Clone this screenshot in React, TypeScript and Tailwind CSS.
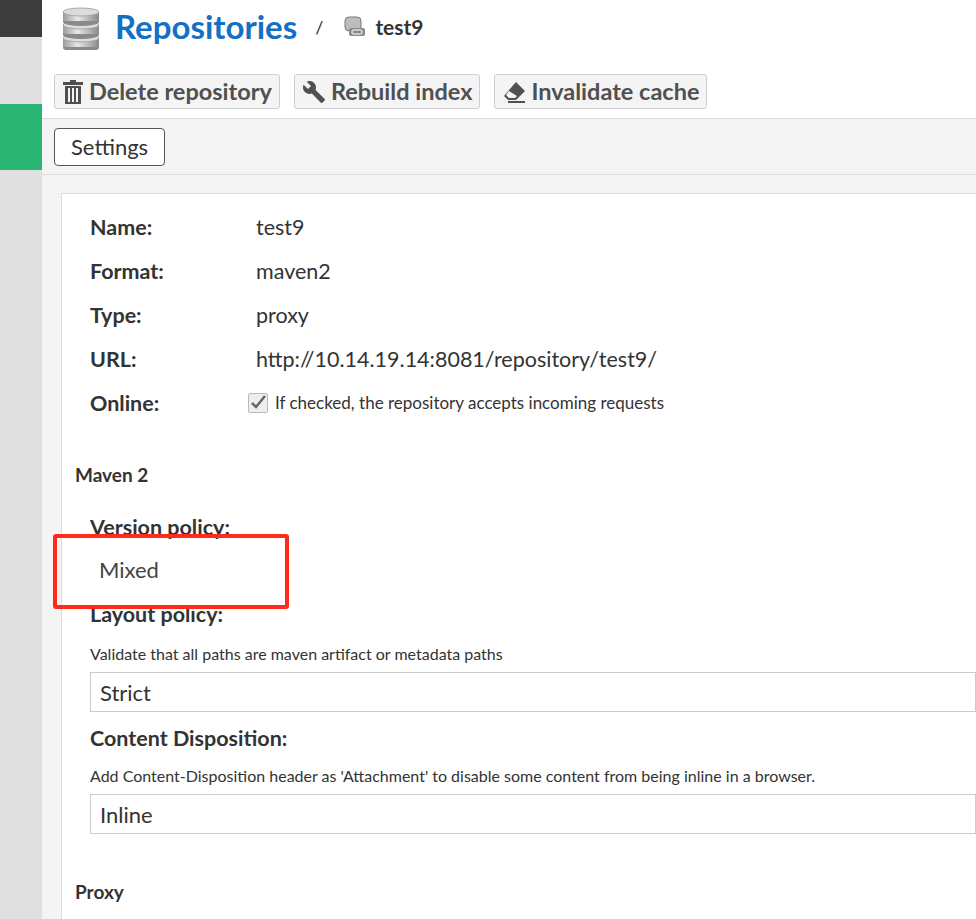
import React from "react";

const Db = ({ s }: { s: number }) => (
  <svg width={s} height={s * 1.15} viewBox="0 0 40 46">
    <defs>
      <linearGradient id="g" x1="0" x2="1">
        <stop offset="0" stopColor="#9a9a9a" />
        <stop offset="0.4" stopColor="#e8e8e8" />
        <stop offset="1" stopColor="#8a8a8a" />
      </linearGradient>
    </defs>
    {[30, 17, 4].map((y) => (
      <g key={y}>
        <rect x="2" y={y + 4} width="36" height="10" fill="url(#g)" />
        <ellipse cx="20" cy={y + 14} rx="18" ry="4" fill="#8a8a8a" />
        <rect x="2" y={y + 4} width="36" height="9" fill="url(#g)" />
        <ellipse cx="20" cy={y + 4} rx="18" ry="4" fill="#dcdcdc" stroke="#9a9a9a" strokeWidth="0.8" />
      </g>
    ))}
  </svg>
);

const Btn = ({ icon, label }: { icon: React.ReactNode; label: string }) => (
  <div className="flex items-center gap-[5px] h-[35px] px-[7px] border border-[#cfcfcf] rounded-[3px] bg-[#f4f4f4] text-[#505050] text-[23.5px] font-bold">
    {icon}
    <span>{label}</span>
  </div>
);

export default function App() {
  const rows = [
    ["Name:", "test9"],
    ["Format:", "maven2"],
    ["Type:", "proxy"],
    ["URL:", "http://10.14.19.14:8081/repository/test9/"],
  ];
  return (
    <div className="flex w-[976px] h-[919px] overflow-hidden relative text-[#333]" style={{ fontFamily: "Lato, 'Open Sans', sans-serif" }}>
      <div className="w-[42px] shrink-0 flex flex-col bg-[#e0e0e0]">
        <div className="h-[37px] bg-[#3c3c3c]" />
        <div className="h-[67px]" />
        <div className="h-[66px] bg-[#2ab574]" />
      </div>
      <div className="flex-1 flex flex-col min-w-0">
        <div className="h-[118px] shrink-0 bg-white flex flex-col">
          <div className="flex items-center h-[54px] pl-[19px]">
            <Db s={40} />
            <span className="ml-[14px] text-[33px] font-bold text-[#1470c4]">Repositories</span>
            <span className="ml-[18px] text-[18px] text-[#333]">/</span>
            <div className="ml-[20px] flex items-center">
              <svg width="24" height="24" viewBox="0 0 24 24">
                <rect x="2" y="2" width="16" height="14" rx="4" fill="#bdbdbd" stroke="#777" />
                <rect x="6" y="13" width="16" height="8" rx="2" fill="#888" />
                <rect x="9" y="15" width="10" height="4" rx="2" fill="none" stroke="#ddd" strokeWidth="1.5" />
              </svg>
              <span className="ml-[8px] text-[21px] font-bold text-[#333]">test9</span>
            </div>
          </div>
          <div className="flex items-center gap-[14px] pl-[12px] mt-[20px]">
            <Btn
              label="Delete repository"
              icon={
                <svg width="22" height="24" viewBox="0 0 22 24" fill="#505050">
                  <rect x="1" y="2" width="20" height="3" />
                  <rect x="8" y="0" width="6" height="3" />
                  <path d="M3 6h16v18H3z M6 8v14h2V8z M10 8v14h2V8z M14 8v14h2V8z" fillRule="evenodd" />
                </svg>
              }
            />
            <Btn
              label="Rebuild index"
              icon={
                <svg width="24" height="24" viewBox="0 0 24 24" fill="#505050">
                  <path d="M22.7 19l-9.1-9.1c.9-2.3.4-5-1.5-6.9-2-2-5-2.4-7.4-1.3L9 6 6 9 1.6 4.7C.4 7.1.9 10.1 2.9 12.1c1.9 1.9 4.6 2.4 6.9 1.5l9.1 9.1c.4.4 1 .4 1.4 0l2.300-2.3c.5-.4.5-1.1.1-1.4z" />
                </svg>
              }
            />
            <Btn
              label="Invalidate cache"
              icon={
                <svg width="24" height="24" viewBox="0 0 24 24" fill="#505050">
                  <path d="M14 2l9 9-9 9H6l-4-4z M7 11l-3 4 3 3h6l2-2z" fillRule="evenodd" />
                  <rect x="6" y="21" width="17" height="2" />
                </svg>
              }
            />
          </div>
        </div>
        <div className="h-[57px] shrink-0 bg-[#f4f4f4] border-t border-b border-[#dcdcdc] flex items-center pl-[12px]">
          <div className="h-[38px] px-[16px] flex items-center border border-[#555] rounded-[4px] bg-white text-[22px] text-[#333]">Settings</div>
        </div>
        <div className="flex-1 bg-[#f4f4f4] pl-[19px] pt-[18px]">
          <div className="h-full bg-white border-l border-t border-[#dcdcdc] pl-[13px] pt-[11px]">
            <div className="pl-[15px] flex flex-col">
              {rows.map(([k, v]) => (
                <div key={k} className="flex items-center h-[44px] text-[21.5px]">
                  <span className="w-[166px] font-bold text-[#333]">{k}</span>
                  <span className="text-[#333]">{v}</span>
                </div>
              ))}
              <div className="flex items-center h-[44px]">
                <span className="w-[158px] font-bold text-[21.5px]">Online:</span>
                <span className="w-[20px] h-[20px] border border-[#bbb] rounded-[2px] bg-[#eee] flex items-center justify-center">
                  <svg width="18" height="18" viewBox="0 0 18 18"><path d="M3 9l4 4 9-11" fill="none" stroke="#666" strokeWidth="2.5" /></svg>
                </span>
                <span className="ml-[7px] text-[17px] text-[#333]">If checked, the repository accepts incoming requests</span>
              </div>
            </div>
            <div className="mt-[36px] text-[19px] font-bold">Maven 2</div>
            <div className="pl-[15px] flex flex-col">
              <div className="mt-[21px] text-[21.5px] font-bold">Version policy:</div>
              <div className="mt-[10px] pl-[9px] text-[22px] text-[#444]">Mixed</div>
              <div className="mt-[12px] text-[21.5px] font-bold">Layout policy:</div>
              <div className="mt-[12px] text-[16px]">Validate that all paths are maven artifact or metadata paths</div>
              <div className="mt-[6px] h-[40px] border border-[#ccc] flex items-center pl-[9px] text-[22px] text-[#333]">Strict</div>
              <div className="mt-[10px] text-[21.5px] font-bold">Content Disposition:</div>
              <div className="mt-[10px] text-[16px]">Add Content-Disposition header as 'Attachment' to disable some content from being inline in a browser.</div>
              <div className="mt-[6px] h-[40px] border border-[#ccc] flex items-center pl-[9px] text-[22px] text-[#333]">Inline</div>
            </div>
            <div className="mt-[44px] text-[19px] font-bold">Proxy</div>
          </div>
        </div>
      </div>
      <div className="absolute left-[53px] top-[534px] w-[236px] h-[75px] border-[4px] border-[#ff2a1a] rounded-[3px]" />
    </div>
  );
}
